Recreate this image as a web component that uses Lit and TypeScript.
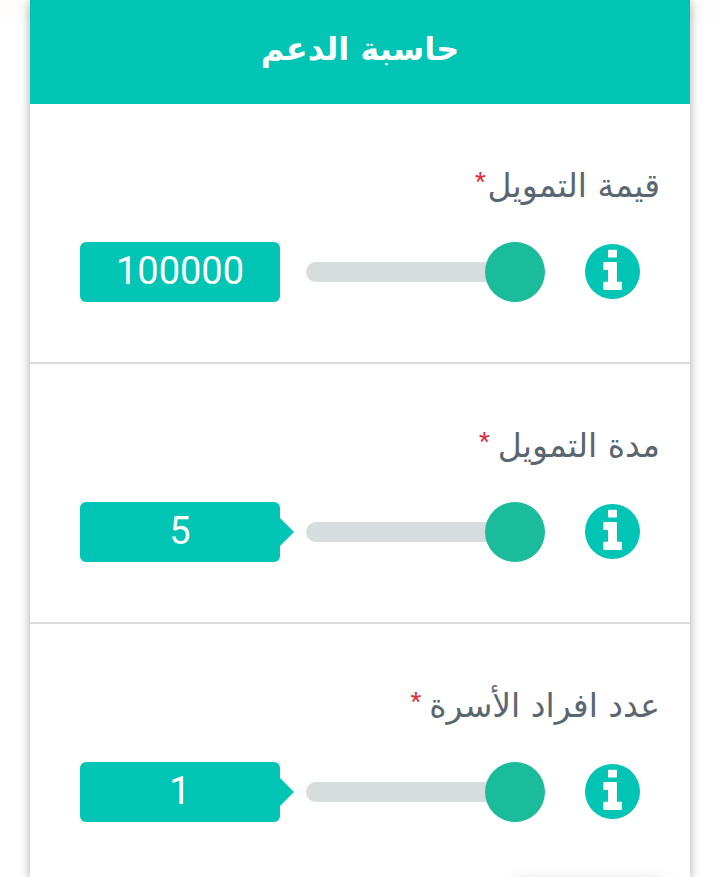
import { LitElement, html, css } from "lit";
import { customElement, property, state } from "lit/decorators.js";
import { classMap } from "lit/directives/class-map.js";

@customElement("range-field")
class RangeField extends LitElement {
  @property() label = "";
  @property({ type: Number }) min = 0;
  @property({ type: Number }) max = 100;
  @property({ type: Number }) step = 1;
  @property({ type: Number }) value = 0;
  @property({ type: Boolean }) pointer = false;
  @property({ type: Boolean }) tight = false;

  static styles = css`
    :host {
      display: block;
      padding: 58px 30px 60px;
      border-bottom: 2px solid #dadcdd;
    }
    :host(:last-of-type) {
      border-bottom: 0;
      padding-bottom: 0;
    }
    .label {
      display: flex;
      align-items: flex-start;
      gap: 8px;
      height: 48px;
      margin-bottom: 32px;
      color: #5a6670;
      font-size: 33px;
      line-height: 48px;
      white-space: nowrap;
    }
    .label.tight {
      gap: 2px;
    }
    .required {
      color: #dc3545;
      font: 500 24px/38px "Roboto", sans-serif;
    }
    .row {
      display: flex;
      align-items: center;
      height: 60px;
      padding: 0 20px;
    }
    .info {
      flex: none;
      width: 55px;
      height: 55px;
      margin: 0 0 2px;
      padding: 0;
      border: 0;
      border-radius: 50%;
      background: #00c4b4;
      cursor: pointer;
    }
    .info svg {
      display: block;
      fill: #fff;
    }
    .slider {
      appearance: none;
      flex: 1;
      min-width: 0;
      height: 20px;
      margin: 0 40px 0 26px;
      border-radius: 10px;
      background: #d7dcdf;
    }
    .slider::-webkit-slider-thumb {
      appearance: none;
      width: 60px;
      height: 60px;
      border-radius: 50%;
      background: #1abc9c;
      cursor: pointer;
    }
    .value {
      position: relative;
      flex: none;
      box-sizing: border-box;
      width: 200px;
      height: 60px;
      border-radius: 6px;
      background: #00c4b4;
      color: #fff;
      font: 38px/58px "Roboto", sans-serif;
      text-align: center;
    }
    .pointer::after {
      content: "";
      position: absolute;
      top: 16px;
      left: 100%;
      border: 14px solid transparent;
      border-left-color: #00c4b4;
      border-right-width: 0;
    }
  `;

  private onInput(e: Event) {
    this.value = Number((e.target as HTMLInputElement).value);
  }

  render() {
    return html`
      <label for="slider" class=${classMap({ label: true, tight: this.tight })}>
        <span>${this.label}</span><span class="required">*</span>
      </label>
      <div class="row">
        <button class="info" type="button" aria-label="معلومات">
          <svg width="55" height="55" viewBox="0 0 55 55" aria-hidden="true">
            <rect x="23" y="5.7" width="9" height="7.7" rx="1" />
            <path
              d="M19.3 18H31a1 1 0 0 1 1 1v18.7h4a1 1 0 0 1 1 1V45a1 1 0 0 1-1 1H19.3a1 1 0 0 1-1-1v-6.3a1 1 0 0 1 1-1H23V26h-3.7a1 1 0 0 1-1-1v-6a1 1 0 0 1 1-1z"
            />
          </svg>
        </button>
        <input
          id="slider"
          class="slider"
          type="range"
          .min=${String(this.min)}
          .max=${String(this.max)}
          .step=${String(this.step)}
          .value=${String(this.value)}
          @input=${this.onInput}
        />
        <output for="slider" class=${classMap({ value: true, pointer: this.pointer })}
          >${this.value}</output
        >
      </div>
    `;
  }
}

@customElement("app-root")
class AppRoot extends LitElement {
  @state() private fields = [
    { label: "قيمة التمويل", min: 100000, max: 5000000, step: 10000, pointer: false, tight: true },
    { label: "مدة التمويل", min: 5, max: 30, step: 1, pointer: true, tight: false },
    { label: "عدد افراد الأسرة", min: 1, max: 20, step: 1, pointer: true, tight: false },
  ];

  static styles = css`
    :host {
      display: flow-root;
      direction: rtl;
      overflow: hidden;
      position: relative;
      background: linear-gradient(#fffdfb 20px, #fff 20px);
      font-family: "DejaVu Sans", sans-serif;
    }
    .card {
      min-height: 100vh;
      margin: 0 29px 0 30px;
      background: #fff;
      box-shadow: 0 2px 10px rgba(0, 0, 0, 0.35);
    }
    .title {
      margin: 0;
      height: 104px;
      background: #00c4b4;
      color: #fff;
      font-size: 32px;
      font-weight: 700;
      line-height: 98px;
      text-align: center;
    }
    .dock {
      position: absolute;
      right: 40px;
      bottom: -62px;
      width: 180px;
      height: 56px;
      border-radius: 28px;
      box-shadow: 0 0 16px rgba(0, 0, 0, 0.25);
    }
  `;

  render() {
    return html`
      <main class="card">
        <h1 class="title">حاسبة الدعم</h1>
        ${this.fields.map(
          (f) => html`<range-field
            .label=${f.label}
            .min=${f.min}
            .max=${f.max}
            .step=${f.step}
            .value=${f.min}
            .pointer=${f.pointer}
            .tight=${f.tight}
          ></range-field>`,
        )}
      </main>
      <div class="dock"></div>
    `;
  }
}
